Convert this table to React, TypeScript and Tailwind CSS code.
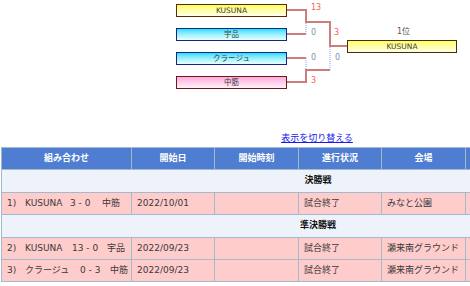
const latin = { fontFamily: '"DejaVu Sans", "Noto Sans CJK JP", sans-serif' }

type Team = { name: string; top: number; box: string }

const teams: Team[] = [
  { name: 'KUSUNA', top: 4, box: 'border-[#5a2a10] bg-gradient-to-b from-[#ffff50] to-[#ffffe8]' },
  { name: '宇品', top: 28, box: 'border-[#1a237e] bg-gradient-to-b from-[#00e0ff] to-[#e6ffff]' },
  { name: 'クラージュ', top: 52, box: 'border-[#1a237e] bg-gradient-to-b from-[#00e0ff] to-[#e6ffff]' },
  { name: '中筋', top: 76, box: 'border-[#6b1a1a] bg-gradient-to-b from-[#ffa8dc] to-[#fff2fa]' },
]

const scores = [
  { v: '13', x: 'left-[311px]', y: 'top-[4px]', win: true },
  { v: '0', x: 'left-[311px]', y: 'top-[29px]', win: false },
  { v: '0', x: 'left-[311px]', y: 'top-[54px]', win: false },
  { v: '3', x: 'left-[311px]', y: 'top-[77px]', win: true },
  { v: '3', x: 'left-[334px]', y: 'top-[29px]', win: true },
  { v: '0', x: 'left-[335px]', y: 'top-[54px]', win: false },
]

function Bracket() {
  return (
    <div className="relative h-[132px]" style={latin}>
      <svg className="absolute left-0 top-0" width="470" height="100">
        <g fill="none" stroke="#cf7c7c" strokeWidth="2">
          <path d="M287 10H306V22H330V46H347" />
          <path d="M287 34H306" />
          <path d="M287 58H306" />
          <path d="M287 82H306V70H330" />
        </g>
        <g fill="none" stroke="#7fa4ff" strokeWidth="1" strokeDasharray="1 1">
          <path d="M306 23V34" />
          <path d="M306 58V69" />
          <path d="M330 47V70" />
        </g>
      </svg>

      {teams.map((t) => (
        <div
          key={t.name}
          className={`absolute left-[176px] w-[111px] h-[13px] border flex items-center justify-center text-[7.5px] leading-none text-[#3a3a3a] ${t.box}`}
          style={{ top: t.top }}
        >
          {t.name}
        </div>
      ))}

      {scores.map((s, i) => (
        <span
          key={i}
          className={`absolute ${s.x} ${s.y} text-[8px] leading-none ${s.win ? 'text-[#ff5c5c]' : 'text-[#8093ad]'}`}
        >
          {s.v}
        </span>
      ))}

      <span className="absolute left-[397px] top-[28px] text-[8px] leading-none text-[#555]">1位</span>
      <div className="absolute left-[347px] top-[40px] w-[110px] h-[13px] border border-[#4a2a10] bg-gradient-to-b from-[#ffff60] to-[#ffffe0] flex items-center justify-center text-[7.5px] leading-none text-[#3a3a3a]">
        KUSUNA
      </div>
    </div>
  )
}

const rows = [
  {
    parts: [
      ['1)', 'w-[18px]'],
      ['KUSUNA', 'w-[45px]'],
      ['3 - 0', 'w-[32px]'],
      ['中筋', ''],
    ],
    date: '2022/10/01',
    place: 'みなと公園',
  },
  {
    parts: [
      ['2)', 'w-[18px]'],
      ['KUSUNA', 'w-[47px]'],
      ['13 - 0', 'w-[35px]'],
      ['宇品', ''],
    ],
    date: '2022/09/23',
    place: '瀬来南グラウンド',
  },
  {
    parts: [
      ['3)', 'w-[18px]'],
      ['クラージュ', 'w-[55px]'],
      ['0 - 3', 'w-[30px]'],
      ['中筋', ''],
    ],
    date: '2022/09/23',
    place: '瀬来南グラウンド',
  },
]

const headers = ['組み合わせ', '開始日', '開始時刻', '進行状況', '会場', '', '']

function MatchRow({ r }: { r: (typeof rows)[number] }) {
  const cell = 'border border-[#a3b9cc] h-[22px] px-[5px] text-left whitespace-nowrap'
  return (
    <tr className="bg-[#ffcccc] text-[#3a3a3a]">
      <td className={cell}>
        {r.parts.map(([t, w]) => (
          <span key={t} className={`inline-block ${w}`}>
            {t}
          </span>
        ))}
      </td>
      <td className={cell}>{r.date}</td>
      <td className={cell}></td>
      <td className={cell}>試合終了</td>
      <td className={cell}>{r.place}</td>
      <td className={cell}></td>
      <td className={cell}></td>
    </tr>
  )
}

function Section({ label }: { label: string }) {
  return (
    <tr className="bg-[#eef3fb]">
      <td colSpan={7} className="border border-[#a3b9cc] h-[23px] text-center font-bold text-[#111]">
        {label}
      </td>
    </tr>
  )
}

export default function App() {
  return (
    <div className="w-[470px] h-[286px] overflow-hidden bg-white" style={latin}>
      <Bracket />
      <div className="w-[634px] text-[9px]">
        <div className="text-center leading-[13px] h-[15px]">
          <a href="#" className="text-[#1a1aee] underline">
            表示を切り替える
          </a>
        </div>
        <table className="table-fixed border-collapse w-[633px] ml-px">
          <colgroup>
            <col className="w-[130px]" />
            <col className="w-[83px]" />
            <col className="w-[84px]" />
            <col className="w-[83px]" />
            <col className="w-[84px]" />
            <col className="w-[84px]" />
            <col className="w-[85px]" />
          </colgroup>
          <thead>
            <tr className="bg-[#4e7dd1] text-white">
              {headers.map((h, i) => (
                <th key={i} className="border border-[#a3b9cc] h-[22px] font-bold text-center">
                  {h}
                </th>
              ))}
            </tr>
          </thead>
          <tbody>
            <Section label="決勝戦" />
            <MatchRow r={rows[0]} />
            <Section label="準決勝戦" />
            <MatchRow r={rows[1]} />
            <MatchRow r={rows[2]} />
          </tbody>
        </table>
      </div>
    </div>
  )
}
